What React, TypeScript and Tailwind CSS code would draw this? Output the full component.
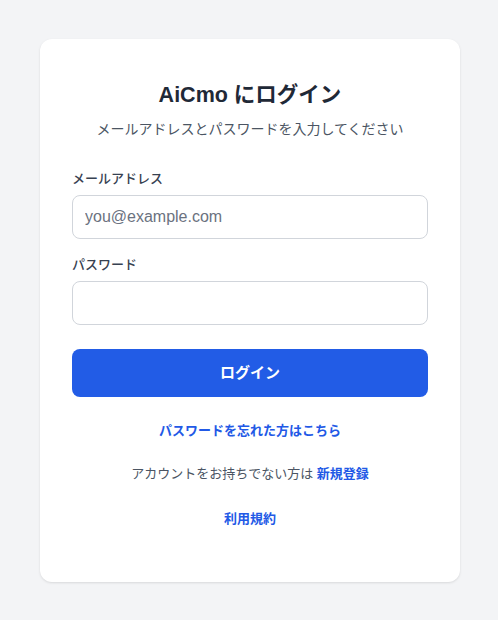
import React from "react";

export default function App() {
  return (
    <div
      className="min-h-screen w-full bg-[#f3f4f6] flex items-start justify-start pt-[39px] pl-[40px]"
      style={{ fontFamily: '"Liberation Sans", "Noto Sans CJK JP", sans-serif' }}
    >
      <div className="w-[420px] h-[543px] bg-white rounded-xl shadow-[0_1px_3px_rgba(0,0,0,0.08),0_1px_2px_rgba(0,0,0,0.04)] px-8 pt-[40px]">
        <div className="text-center">
          <h1 className="text-[21.5px] leading-8 font-bold text-[#1f2937]">AiCmo にログイン</h1>
          <p className="mt-[8px] text-sm leading-5 text-[#4b5563]">メールアドレスとパスワードを入力してください</p>
        </div>
        <form className="mt-[30px]" onSubmit={(e) => e.preventDefault()}>
          <label className="block text-[13px] leading-5 font-medium text-[#374151]">メールアドレス</label>
          <input
            type="email"
            placeholder="you@example.com"
            className="mt-[6px] block w-full h-[44px] rounded-lg border border-[#d1d5db] px-3 text-base text-[#111827] placeholder:text-[#6b7280] outline-none"
          />
          <label className="mt-[16px] block text-[13px] leading-5 font-medium text-[#374151]">パスワード</label>
          <input
            type="password"
            className="mt-[6px] block w-full h-[44px] rounded-lg border border-[#d1d5db] px-3 text-base outline-none"
          />
          <button
            type="submit"
            className="mt-[24px] w-full h-[48px] rounded-lg bg-[#225ce6] text-white text-[15px] font-bold"
          >
            ログイン
          </button>
        </form>
        <div className="mt-[24px] text-center text-[13px] leading-5">
          <a className="font-bold text-[#2259e6]">パスワードを忘れた方はこちら</a>
        </div>
        <div className="mt-[23px] text-center text-[13px] leading-5 text-[#4b5563]">
          アカウントをお持ちでない方は <a className="font-bold text-[#2259e6]">新規登録</a>
        </div>
        <div className="mt-[25px] text-center text-[13px] leading-5">
          <a className="font-bold text-[#2259e6]">利用規約</a>
        </div>
      </div>
    </div>
  );
}
